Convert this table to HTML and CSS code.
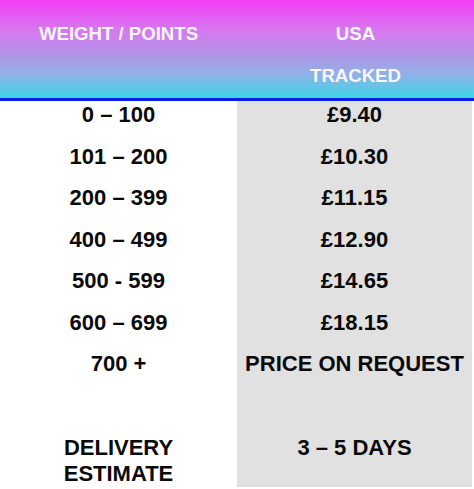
FILE: index.html
```html
<!DOCTYPE html>
<html>
<head>
<meta charset="utf-8">
<link rel="stylesheet" href="styles.css">
</head>
<body>
<div class="table">
  <div class="head">
    <div class="hcell">WEIGHT / POINTS</div>
    <div class="hcell">USA<br>TRACKED</div>
  </div>
  <div class="body">
    <div class="col left">
      <div class="row">0 – 100</div>
      <div class="row">101 – 200</div>
      <div class="row">200 – 399</div>
      <div class="row">400 – 499</div>
      <div class="row">500 - 599</div>
      <div class="row">600 – 699</div>
      <div class="row">700 +</div>
      <div class="delivery">DELIVERY<br>ESTIMATE</div>
    </div>
    <div class="col right">
      <div class="row">£9.40</div>
      <div class="row">£10.30</div>
      <div class="row">£11.15</div>
      <div class="row">£12.90</div>
      <div class="row">£14.65</div>
      <div class="row">£18.15</div>
      <div class="row">PRICE ON REQUEST</div>
      <div class="delivery">3 – 5 DAYS</div>
    </div>
  </div>
</div>
</body>
</html>
```
FILE: styles.css
```css
html, body {
  margin: 0;
  padding: 0;
  background: #ffffff;
}
body {
  font-family: "Liberation Sans", Arial, sans-serif;
  font-weight: bold;
  width: 474px;
  height: 489px;
  overflow: hidden;
}
.table {
  width: 474px;
}
.head {
  display: grid;
  grid-template-columns: 237px 237px;
  height: 98px;
  background: linear-gradient(to bottom, #f43cf6 0%, #d777ef 30%, #b393e8 55%, #92b0e6 75%, #3dd6e6 100%);
  border-bottom: 3px solid #0b1ee2;
}
.hcell {
  color: #fbf4fc;
  font-size: 18.6px;
  line-height: 42.5px;
  padding-top: 12.5px;
  text-align: center;
}
.body {
  display: grid;
  grid-template-columns: 237px 235px;
  height: 386px;
}
.col {
  display: flex;
  flex-direction: column;
  color: #0a0a0a;
  font-size: 22px;
  text-align: center;
}
.right {
  background: #e1e1e1;
}
.row {
  height: 41.5px;
  line-height: 28px;
}
.delivery {
  margin-top: 43px;
  line-height: 26px;
}
```
